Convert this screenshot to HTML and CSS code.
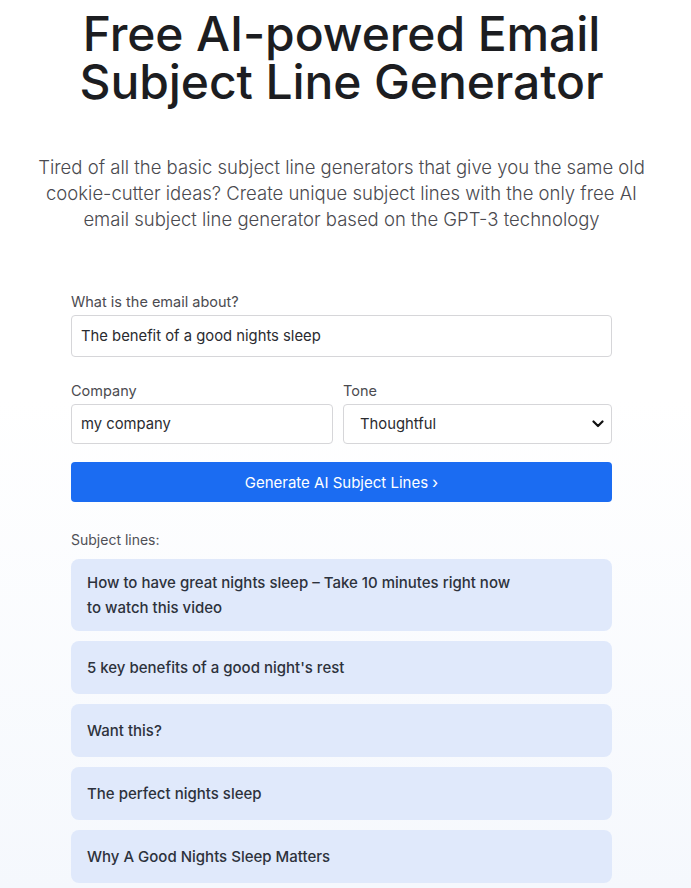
FILE: index.html
```html
<!DOCTYPE html>
<html lang="en">
<head>
<meta charset="utf-8">
<title>Free AI-powered Email Subject Line Generator</title>
<link rel="stylesheet" href="styles.css">
</head>
<body>
<div class="page">
  <h1 class="title">Free AI-powered Email<br>Subject Line Generator</h1>
  <p class="lead">Tired of all the basic subject line generators that give you the same old cookie-cutter ideas? Create unique subject lines with the only free AI email subject line generator based on the GPT-3 technology</p>

  <form class="form">
    <div class="field">
      <label class="label">What is the email about?</label>
      <div class="input input-tall">The benefit of a good nights sleep</div>
    </div>
    <div class="row">
      <div class="field">
        <label class="label">Company</label>
        <div class="input">my company</div>
      </div>
      <div class="field">
        <label class="label">Tone</label>
        <div class="input select"><span class="select-text">Thoughtful</span>
          <svg class="chev" viewBox="0 0 12 8" width="12" height="8"><path d="M1.5 1.5 L6 6 L10.5 1.5" fill="none" stroke="#111" stroke-width="2.2" stroke-linecap="round" stroke-linejoin="round"/></svg>
        </div>
      </div>
    </div>
    <div class="button">Generate AI Subject Lines <span class="gt">›</span></div>
  </form>

  <section class="results">
    <div class="results-label">Subject lines:</div>
    <div class="card card-multi">How to have great nights sleep – Take 10 minutes right now<br>to watch this video</div>
    <div class="card">5 key benefits of a good night's rest</div>
    <div class="card">Want this?</div>
    <div class="card">The perfect nights sleep</div>
    <div class="card">Why A Good Nights Sleep Matters</div>
  </section>
</div>
</body>
</html>
```

FILE: styles.css
```css
html, body {
  margin: 0;
  padding: 0;
}
body {
  font-family: Inter, "Noto Sans", sans-serif;
  background: linear-gradient(180deg, #ffffff 0%, #ffffff 45%, #f5f8fd 100%);
  min-height: 888px;
  color: #1f2024;
}
.page {
  width: 683px;
  display: flex;
  flex-direction: column;
  align-items: center;
}
.title {
  margin: 10px 0 0;
  font-size: 48px;
  line-height: 48px;
  font-weight: 500;
  text-align: center;
  letter-spacing: -0.1px;
  color: #1c1d21;
}
.lead {
  margin: 48px 0 0;
  width: 624px;
  font-size: 18.5px;
  line-height: 26px;
  font-weight: 300;
  color: #4a4a4f;
  text-align: center;
}
.form {
  margin-top: 60px;
  width: 541px;
  display: flex;
  flex-direction: column;
}
.field {
  display: flex;
  flex-direction: column;
  min-width: 0;
}
.label {
  font-size: 14.5px;
  line-height: 20px;
  color: #4b4b50;
  margin-bottom: 3px;
}
.input {
  height: 40px;
  box-sizing: border-box;
  border: 1px solid #d6d6d9;
  border-radius: 4px;
  background: #fff;
  padding: 0 9px;
  display: flex;
  align-items: center;
  font-size: 14.8px;
  color: #2a2b30;
}
.input-tall {
  height: 42px;
}
.row {
  display: grid;
  grid-template-columns: 262px 1fr;
  column-gap: 10px;
  margin-top: 24px;
}
.select {
  justify-content: space-between;
  padding: 0 7px 0 16px;
}
.chev {
  display: block;
}
.button {
  margin-top: 18px;
  height: 40px;
  border-radius: 4px;
  background: #1b6cf2;
  color: #fff;
  font-size: 15px;
  display: flex;
  align-items: center;
  justify-content: center;
}
.gt {
  margin-left: 4px;
  font-size: 16px;
}
.results {
  margin-top: 29px;
  width: 541px;
  display: flex;
  flex-direction: column;
  gap: 10px;
}
.results-label {
  font-size: 14px;
  line-height: 18px;
  color: #505056;
  margin-bottom: 0;
}
.card {
  background: #e0e9fb;
  border-radius: 8px;
  padding: 12px 16px;
  min-height: 53px;
  box-sizing: border-box;
  display: flex;
  align-items: center;
  font-size: 15px;
  line-height: 25px;
  font-weight: 500;
  color: #2d323c;
}
.card-multi {
  display: block;
  padding: 11px 16px;
  min-height: 72px;
}
```
